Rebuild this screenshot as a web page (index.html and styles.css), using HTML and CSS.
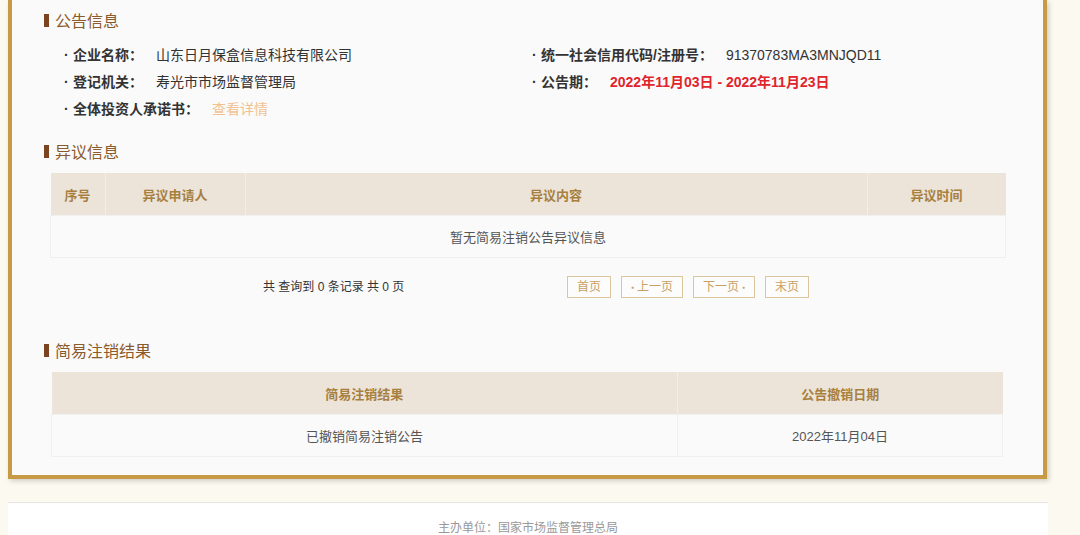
FILE: index.html
```html
<!DOCTYPE html>
<html lang="zh-CN">
<head>
  <meta charset="UTF-8" />
  <title>简易注销公告详情</title>
  <link rel="stylesheet" href="styles.css">
</head>
<body>

  <div class="detail-box">
    <h3 class="section-title">公告信息</h3>

    <ul class="info-list">
      <li><span class="label">企业名称：</span><span class="value">山东日月保盒信息科技有限公司</span></li>
      <li><span class="label">统一社会信用代码/注册号：</span><span class="value">91370783MA3MNJQD11</span></li>
      <li><span class="label">登记机关：</span><span class="value">寿光市市场监督管理局</span></li>
      <li><span class="label">公告期：</span><span class="value date-range">2022年11月03日 - 2022年11月23日</span></li>
      <li><span class="label">全体投资人承诺书：</span><a class="value link" href="#">查看详情</a></li>
    </ul>

    <h3 class="section-title">异议信息</h3>

    <table class="data-table objection-table">
      <thead>
        <tr>
          <th class="col-no">序号</th>
          <th class="col-person">异议申请人</th>
          <th>异议内容</th>
          <th class="col-time">异议时间</th>
        </tr>
      </thead>
      <tbody>
        <tr>
          <td colspan="4">暂无简易注销公告异议信息</td>
        </tr>
      </tbody>
    </table>

    <div class="pager">
      <span class="pager-info">共 查询到 0 条记录 共 0 页</span>
      <div class="pager-btns">
        <a href="#" class="page-btn">首页</a>
        <a href="#" class="page-btn"><span class="dot dot-left">&#9679;</span>上一页</a>
        <a href="#" class="page-btn">下一页<span class="dot dot-right">&#9679;</span></a>
        <a href="#" class="page-btn">末页</a>
      </div>
    </div>

    <h3 class="section-title">简易注销结果</h3>

    <table class="data-table result-table">
      <thead>
        <tr>
          <th>简易注销结果</th>
          <th class="col-date">公告撤销日期</th>
        </tr>
      </thead>
      <tbody>
        <tr>
          <td>已撤销简易注销公告</td>
          <td class="col-date">2022年11月04日</td>
        </tr>
      </tbody>
    </table>
  </div>

  <div class="footer">主办单位：国家市场监督管理总局</div>

</body>
</html>
```

FILE: styles.css
```css
body {
  margin: 0;
  background: #fcf9f0;
  font-family: "Liberation Sans", "Noto Sans CJK SC", sans-serif;
  color: #333;
}

.detail-box {
  width: 1039px;
  box-sizing: border-box;
  margin-left: 8px;
  padding: 9px 40px 18px 32px;
  background: #fafafa;
  border: 4px solid #c99a45;
  border-top: none;
  box-shadow: 2px 2px 5px rgba(0, 0, 0, 0.18);
}

.section-title {
  display: flex;
  align-items: center;
  gap: 6px;
  margin: 0;
  height: 22px;
  font-size: 16px;
  font-weight: normal;
  color: #8b5a2b;
}

.section-title::before {
  content: "";
  width: 5px;
  height: 13px;
  background: #7a4420;
}

.info-list {
  list-style: none;
  margin: 11px 0 17px;
  padding: 0 0 0 20px;
  display: grid;
  grid-template-columns: 468px 1fr;
  font-size: 14px;
  line-height: 27px;
}

.info-list li::before {
  content: "·";
  display: inline-block;
  width: 9px;
  font-weight: bold;
}

.info-list .label {
  font-weight: bold;
  margin-right: 13px;
}

.info-list .value {
  color: #333;
}

.date-range {
  color: #e0242c !important;
  font-weight: bold;
}

.info-list .link {
  color: #f1c291;
  text-decoration: none;
}

.data-table {
  border-collapse: collapse;
  font-size: 13px;
  margin-top: 11px;
}

.data-table th {
  height: 42px;
  padding: 0;
  background: #ece4d9;
  color: #a7803f;
  font-weight: bold;
  border-left: 1px solid #f3eee6;
}

.data-table th:first-child {
  border-left: none;
}

.data-table td {
  height: 41px;
  padding: 0;
  text-align: center;
  color: #555;
  background: #fafafa;
  border: 1px solid #f0f0f0;
}

.objection-table {
  width: 956px;
  margin-left: 6px;
}

.objection-table .col-no {
  width: 54px;
}

.objection-table .col-person {
  width: 139px;
}

.objection-table .col-time {
  width: 138px;
}

.pager {
  display: flex;
  align-items: center;
  margin: 18px 0 41px;
  padding-left: 219px;
  font-size: 12px;
  line-height: 20px;
}

.pager-info {
  width: 304px;
}

.pager-btns {
  display: flex;
  gap: 10px;
}

.page-btn {
  display: inline-flex;
  align-items: center;
  height: 22px;
  box-sizing: border-box;
  padding: 0 9px;
  border: 1px solid #dcc69e;
  color: #c9a063;
  text-decoration: none;
  font-size: 12px;
  background: #fcfcfc;
}

.dot {
  font-size: 5px;
}

.dot-left {
  margin-right: 3px;
}

.dot-right {
  margin-left: 3px;
}

.result-table {
  width: 952px;
  margin-left: 7px;
}

.result-table .col-date {
  width: 324px;
}

.footer {
  width: 1040px;
  box-sizing: border-box;
  margin: 23px 0 0 8px;
  padding-top: 15px;
  height: 60px;
  background: #fff;
  border-top: 1px solid #e8e6e0;
  text-align: center;
  font-size: 12px;
  color: #999;
}
```
